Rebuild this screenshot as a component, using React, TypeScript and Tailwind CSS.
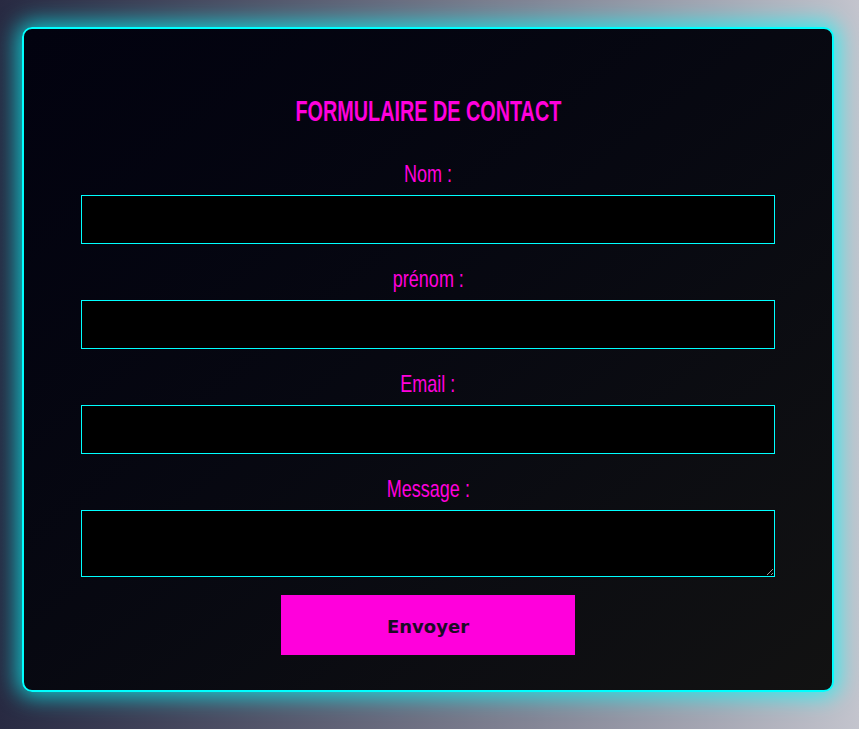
import React from "react"

const fields = [
  { id: "nom", label: "Nom :" },
  { id: "prenom", label: "prénom :" },
  { id: "email", label: "Email :" },
]

function Label({ htmlFor, children }: { htmlFor: string; children: React.ReactNode }) {
  return (
    <label
      htmlFor={htmlFor}
      className="mb-[7px] block text-center font-['Liberation_Sans',sans-serif] text-[24px] leading-[28px] text-[#ff00dc]"
    >
      <span className="inline-block scale-x-75">{children}</span>
    </label>
  )
}

export default function App() {
  return (
    <div className="min-h-screen bg-gradient-to-r from-[#282a42] to-[#c3c4cd] pl-[22px] pt-[27px]">
      <div className="w-[812px] rounded-[10px] border-2 border-[#00ffff] bg-gradient-to-br from-[#02020f] to-[#121212] px-[57px] pb-[35px] pt-[64px] shadow-[0_0_22px_4px_rgba(0,255,255,0.75)]">
        <h1 className="mb-[31px] text-center font-['Liberation_Sans',sans-serif] text-[30px] font-bold leading-[36px] text-[#ff00dc]">
          <span className="inline-block scale-x-66">FORMULAIRE DE CONTACT</span>
        </h1>

        <form className="flex flex-col" onSubmit={(e) => e.preventDefault()}>
          {fields.map((f) => (
            <div key={f.id} className="mb-[21px]">
              <Label htmlFor={f.id}>{f.label}</Label>
              <input
                id={f.id}
                type={f.id === "email" ? "email" : "text"}
                className="block h-[49px] w-full border border-[#00ffff] bg-black px-2 text-white outline-none"
              />
            </div>
          ))}

          <div className="mb-[18px]">
            <Label htmlFor="message">Message :</Label>
            <textarea
              id="message"
              className="block h-[67px] w-full border border-[#00ffff] bg-black px-2 text-white outline-none"
            />
          </div>

          <button
            type="submit"
            className="mx-auto h-[60px] w-[294px] bg-[#ff00dc] pt-[3px] font-['DejaVu_Sans',sans-serif] text-[18px] font-bold text-[#1b0b26]"
          >
            Envoyer
          </button>
        </form>
      </div>
    </div>
  )
}
